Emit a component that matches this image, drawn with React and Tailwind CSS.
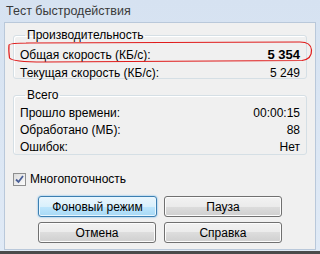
import React from 'react'

const font = { fontFamily: '"Liberation Sans", Arial, sans-serif' }

const Row = ({ label, value, bold, h = 'h-[17px]' }) => (
  <div className={`flex ${h} items-center justify-between`}>
    <span>{label}</span>
    <span className={bold ? 'font-bold text-[13px]' : ''}>{value}</span>
  </div>
)

const Group = ({ title, children, className }) => (
  <fieldset className={`rounded-[3px] border border-[#d5dfe5] shadow-[inset_1px_1px_0_#fff] ${className}`}>
    <legend className="ml-[5px] px-[2px] leading-[14px]">{title}</legend>
    {children}
  </fieldset>
)

const Button = ({ children, active }) => (
  <button
    type="button"
    className={
      active
        ? 'h-[21px] w-[119px] rounded-[3px] border border-[#3c7fb1] bg-[linear-gradient(#eaf6fd_0%,#d9f0fc_50%,#bee6fd_50%,#a7d9f5_100%)] text-black shadow-[0_0_2px_#5ab0ef,inset_0_0_0_1px_#e8f6fe]'
        : 'h-[21px] w-[118px] rounded-[3px] border border-[#707070] bg-[linear-gradient(#f2f2f2_0%,#ebebeb_50%,#dddddd_50%,#cfcfcf_100%)] text-black shadow-[inset_0_0_0_1px_#fcfcfc]'
    }
  >
    {children}
  </button>
)

export default function App() {
  return (
    <div className="relative h-[254px] w-[320px] overflow-hidden bg-[linear-gradient(#d6e2f1,#e0eaf6)] text-[12px] text-black" style={font}>
      <div className="flex h-[22px] items-center pl-[6px] text-[12.5px] text-[#3a3a3a]">Тест быстродействия</div>
      <div className="mx-[4px] flex h-[228px] flex-col border border-[#b9c8da] bg-[#f0f0f0] px-[8px]">
        <Group title="Производительность" className="mt-[5px] h-[51px] px-[6px]">
          <div className="mt-[4px]">
            <Row label="Общая скорость (КБ/с):" value="5 354" bold h="h-[18px]" />
            <Row label="Текущая скорость (КБ/с):" value="5 249" h="h-[18px]" />
          </div>
        </Group>
        <Group title="Всего" className="mt-[9px] h-[67px] px-[6px]">
          <div className="mt-[2px]">
            <Row label="Прошло времени:" value="00:00:15" />
            <Row label="Обработано (МБ):" value="88" />
            <Row label="Ошибок:" value="Нет" />
          </div>
        </Group>
        <label className="mt-[15px] flex items-center gap-[4px]">
          <span className="flex h-[13px] w-[13px] items-center justify-center border border-[#8e8f8f] bg-[linear-gradient(135deg,#dcdcdc,#fbfbfb)]">
            <svg width="9" height="9" viewBox="0 0 9 9">
              <path d="M1 4.5 L3.5 7 L8 1" fill="none" stroke="#4a5f97" strokeWidth="1.8" />
            </svg>
          </span>
          <span>Многопоточность</span>
        </label>
        <div className="mt-[8px] grid grid-cols-[119px_118px] gap-x-[7px] gap-y-[5px] pl-[25px]">
          <Button active>Фоновый режим</Button>
          <Button>Пауза</Button>
          <Button>Отмена</Button>
          <Button>Справка</Button>
        </div>
      </div>
      <div className="absolute bottom-0 left-0 h-[3px] w-full bg-[#4a4a4a]" />
      <svg className="pointer-events-none absolute left-0 top-0" width="320" height="254">
        <path
          d="M26 43 L300 42 Q311 42 311.5 50 Q312 59 302 60.5 L44 62 Q12 62 9.5 58 Q8.5 50 9 45 Q9.5 43 30 43"
          fill="none"
          stroke="#e01c1c"
          strokeWidth="1.2"
        />
      </svg>
    </div>
  )
}
